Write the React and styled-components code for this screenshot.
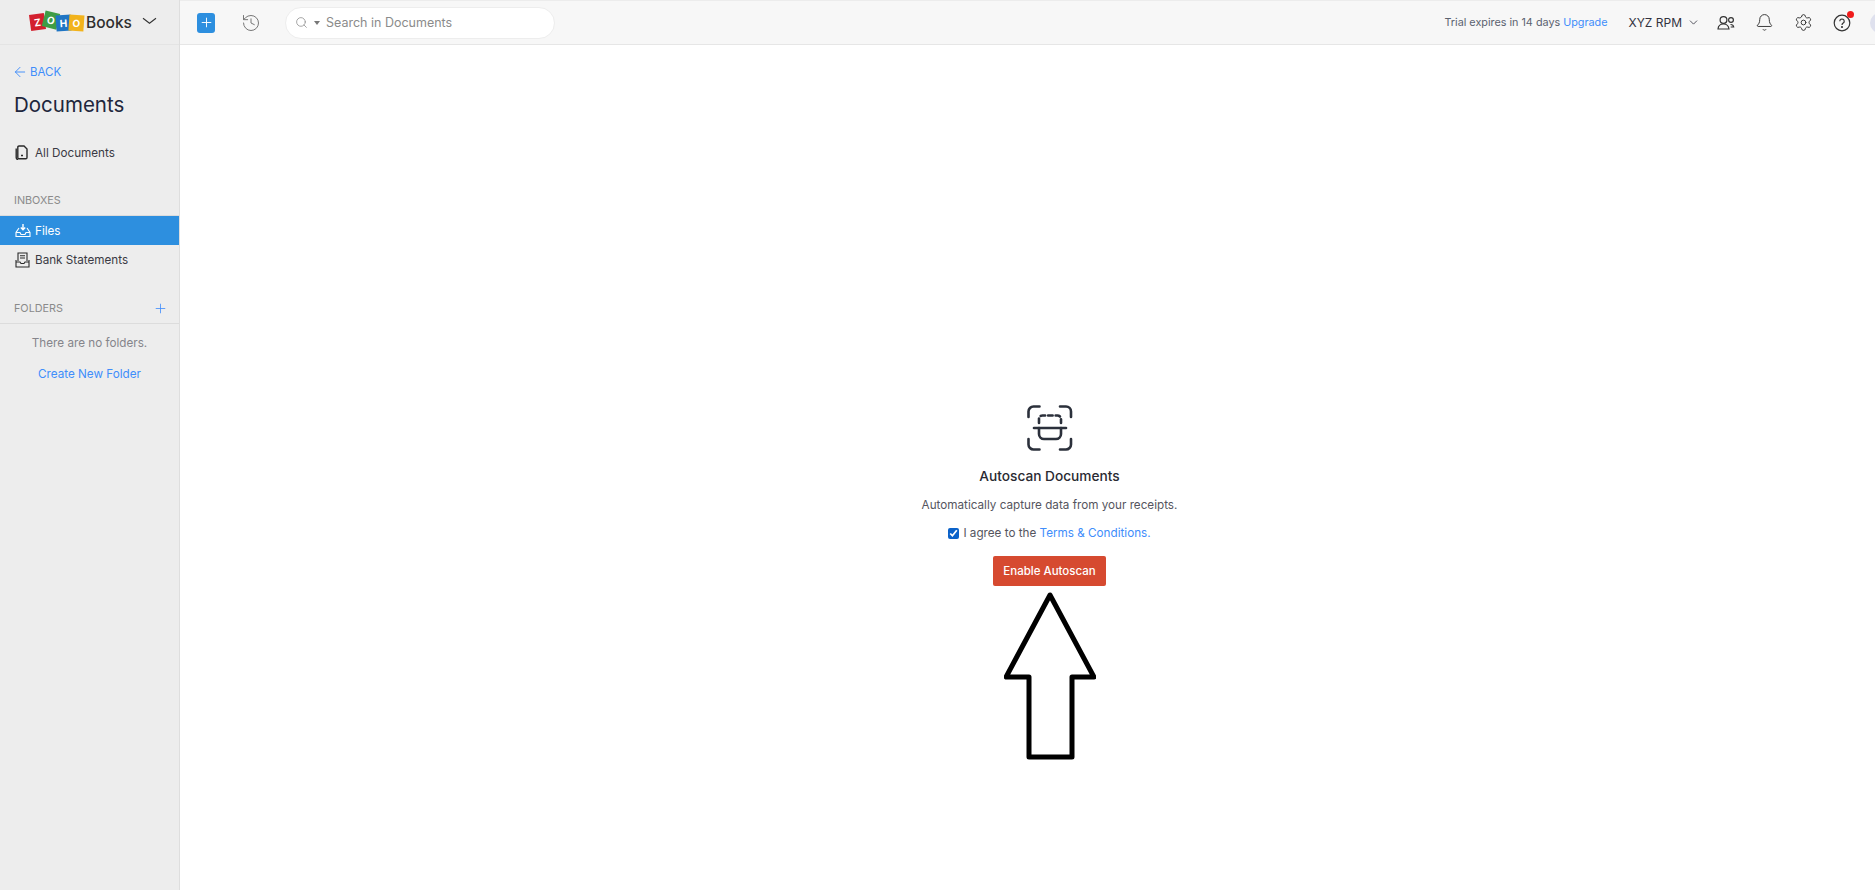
import React from "react";
import styled, { createGlobalStyle } from "styled-components";
import { ArrowLeft, Bell, ChevronDown, History, Plus, Search, Settings } from "lucide-react";

const GlobalStyle = createGlobalStyle`
	html, body {
		margin: 0;
		padding: 0;
		height: 100%;
		background: #fff;
		overflow: hidden;
	}
	body, input {
		font-family: Inter, "Liberation Sans", sans-serif;
	}
`;

const Page = styled.div`
	display: flex;
	width: 1875px;
	height: 890px;
`;

const Sidebar = styled.aside`
	width: 180px;
	box-sizing: border-box;
	flex: none;
	display: flex;
	flex-direction: column;
	background: #ededed;
	border-right: 1px solid #dedede;
`;

const Brand = styled.div`
	height: 44px;
	flex: none;
	display: flex;
	align-items: center;
	padding-left: 30px;
	border-bottom: 1px solid #e4e4e4;
	color: #2f2f2f;
`;

const Tiles = styled.div`
	display: flex;
	align-items: center;
	width: 56px;
`;

const Tile = styled.span`
	width: 15px;
	height: 16px;
	margin-right: -2px;
	flex: none;
	display: flex;
	align-items: center;
	justify-content: center;
	background: ${(p) => p.$bg};
	color: #fff;
	font-size: 10px;
	font-weight: 700;
	line-height: 1;
	transform: rotate(${(p) => p.$turn}deg) translateY(${(p) => p.$lift}px);
`;

const BrandName = styled.span`
	font-size: 15.5px;
	font-weight: 500;
	margin-right: 10px;
`;

const BrandArrow = styled.svg`
	margin-bottom: 2px;
`;

const SideBody = styled.div`
	display: flex;
	flex-direction: column;
	padding-top: 18px;
`;

const BackLink = styled.div`
	display: flex;
	align-items: center;
	gap: 2px;
	height: 17px;
	padding-left: 12px;
	color: #408dfb;
	font-size: 11.5px;
`;

const SideTitle = styled.h1`
	margin: 10px 0 0 14px;
	font-size: 20.5px;
	line-height: 30px;
	font-weight: 400;
	color: #21263c;
`;

const IconSlot = styled.span`
	width: 20px;
	flex: none;
	display: flex;
`;

const NavRow = styled.div`
	display: flex;
	align-items: center;
	height: 29px;
	padding-left: 15px;
	font-size: 11.7px;
	color: ${(p) => (p.$active ? "#fff" : "#3a3a44")};
	background: ${(p) => (p.$active ? "#2d8fdf" : "transparent")};
`;

const AllDocs = styled(NavRow)`
	margin-top: 18px;
`;

const SectionHead = styled.div`
	display: flex;
	align-items: center;
	justify-content: space-between;
	height: ${(p) => p.$h}px;
	margin-top: ${(p) => p.$top}px;
	padding: 0 11px 0 14px;
	border-bottom: 1px solid #dcdcdc;
	color: #8a8a8a;
	font-size: 10.8px;
`;

const EmptyNote = styled.div`
	margin-top: 10px;
	line-height: 18px;
	text-align: center;
	font-size: 11.7px;
	color: #85858b;
`;

const CreateLink = styled.div`
	margin-top: 13px;
	line-height: 18px;
	text-align: center;
	font-size: 11.7px;
	color: #408dfb;
`;

const Content = styled.div`
	flex: 1;
	display: flex;
	flex-direction: column;
	min-width: 0;
`;

const TopBar = styled.header`
	flex: none;
	display: flex;
	align-items: center;
	padding: 0 16px 0 17px;
	background: #f7f7f7;
	border-top: 1px solid #ececec;
	border-bottom: 1px solid #e6e6e6;
	box-sizing: border-box;
	height: 45px;
	color: #3b3b3b;
`;

const AddButton = styled.div`
	width: 18px;
	height: 20px;
	display: flex;
	align-items: center;
	justify-content: center;
	border-radius: 3px;
	background: #2d8fdf;
	color: #fff;
`;

const HistoryBtn = styled.div`
	display: flex;
	margin-left: 26px;
	color: #777;
`;

const SearchBox = styled.div`
	width: 270px;
	height: 32px;
	box-sizing: border-box;
	margin-left: 24px;
	padding-left: 9px;
	display: flex;
	align-items: center;
	background: #fff;
	border: 1px solid #ededed;
	border-radius: 16px;
	color: #8b8b8b;
	font-size: 12.5px;
`;

const Caret = styled.span`
	width: 0;
	height: 0;
	margin: 0 6px 0 6px;
	border-left: 3px solid transparent;
	border-right: 3px solid transparent;
	border-top: 4px solid #777;
`;

const TopRight = styled.div`
	margin-left: auto;
	display: flex;
	align-items: center;
`;

const Trial = styled.span`
	font-size: 10.8px;
	color: #5b6270;
`;

const Upgrade = styled.span`
	color: #408dfb;
`;

const OrgName = styled.div`
	display: flex;
	align-items: center;
	gap: 5px;
	margin: 0 17px 0 21px;
	font-size: 12px;
	color: #33333f;
`;

const IconBtn = styled.div`
	position: relative;
	display: flex;
	margin-left: ${(p) => p.$gap || 0}px;
	color: #333;
`;

const RedDot = styled.span`
	position: absolute;
	top: -3px;
	right: -3px;
	width: 7px;
	height: 7px;
	border-radius: 50%;
	background: #f01b1b;
`;

const Avatar = styled.div`
	width: 20px;
	height: 20px;
	margin-left: 19px;
	margin-right: -31px;
	flex: none;
	border-radius: 50%;
	background: #dfe1ee;
`;

const Main = styled.main`
	flex: 1;
	display: flex;
	flex-direction: column;
	align-items: center;
	padding: 360px 0 0 44px;
	background: #fff;
	overflow: hidden;
`;

const ScanTitle = styled.h2`
	margin: 15px 0 0;
	font-size: 13.7px;
	line-height: 20px;
	font-weight: 500;
	color: #2a2a32;
`;

const ScanText = styled.p`
	margin: 10px 0 0;
	font-size: 11.7px;
	line-height: 18px;
	color: #55555e;
`;

const AgreeRow = styled.label`
	display: flex;
	align-items: center;
	gap: 4px;
	margin-top: 10px;
	font-size: 11.7px;
	line-height: 18px;
	color: #55555e;
`;

const AgreeBox = styled.input`
	width: 11px;
	height: 11px;
	margin: 0;
	accent-color: #0b62c9;
`;

const TermsLink = styled.span`
	color: #408dfb;
`;

const EnableButton = styled.button`
	width: 113px;
	height: 30px;
	margin-top: 14px;
	padding: 0;
	border: none;
	border-radius: 2px;
	background: #d64a30;
	color: #fff;
	font-family: inherit;
	font-size: 11.5px;
	font-weight: 500;
`;

const ArrowMark = styled.svg`
	display: block;
	margin-top: 6px;
`;

const ZohoTiles = () => (
	<Tiles>
		<Tile $bg="#d3202e" $turn={-8} $lift={0}>Z</Tile>
		<Tile $bg="#3f9d45" $turn={14} $lift={-2}>O</Tile>
		<Tile $bg="#1f75c4" $turn={-4} $lift={1}>H</Tile>
		<Tile $bg="#f2b31c" $turn={4} $lift={1}>O</Tile>
	</Tiles>
);

const BrandChevron = () => (
	<BrandArrow width="15" height="8" viewBox="0 0 15 8" fill="none" stroke="#333" strokeWidth="1.1">
		<path d="M1 1.2l6.5 5 6.5-5" />
	</BrandArrow>
);

const DocIcon = () => (
	<svg width="13" height="15" viewBox="0 0 13 15" fill="none" stroke="#2a2a2a" strokeWidth="1.4">
		<path d="M4 1h5l3 3v8.5a1.2 1.2 0 0 1-1.2 1.2H4a1.2 1.2 0 0 1-1.2-1.2V2.2A1.2 1.2 0 0 1 4 1z" />
		<path d="M1.2 3.5v9a2 2 0 0 0 2 2" />
		<path d="M6 10.5h2" />
	</svg>
);

const InboxIcon = () => (
	<svg width="16" height="15" viewBox="0 0 16 15" fill="none" stroke="currentColor" strokeWidth="1.1">
		<path d="M4 5L1 9.5v4h14v-4L12 5" />
		<path d="M1 9.5h4l1 2h4l1-2h4" />
		<path d="M8 1v5.5M5.8 4.6L8 6.8l2.2-2.2" strokeWidth="1.4" />
	</svg>
);

const StatementIcon = () => (
	<svg width="15" height="16" viewBox="0 0 15 16" fill="none" stroke="#2a2a2a" strokeWidth="1.1">
		<path d="M3 9V1h9v8" />
		<path d="M5 3.8h5M5 6h5" />
		<path d="M1 8v7h13V8" />
		<path d="M1 10h4l1 1.5h3l1-1.5h4" />
	</svg>
);

const TeamIcon = () => (
	<svg width="18" height="16" viewBox="0 0 18 16" fill="none" stroke="#333" strokeWidth="1.2">
		<circle cx="6.5" cy="5" r="3.4" />
		<path d="M1 14c.3-3.2 2.4-5 5.5-5s5 1.6 5.5 5z" />
		<circle cx="14" cy="5" r="2.4" />
		<path d="M13.5 9.5c2 0 3 1 3.2 2.5h-3" />
	</svg>
);

const HelpIcon = () => (
	<svg width="18" height="18" viewBox="0 0 18 18" fill="none" stroke="#333" strokeWidth="1.2">
		<circle cx="9" cy="9" r="7.8" />
		<path d="M6.8 7.2a2.2 2.2 0 1 1 3.4 1.9c-.8.5-1.2 1-1.2 1.9" />
		<circle cx="9" cy="13" r=".5" />
	</svg>
);

const ScanIcon = () => (
	<svg width="46" height="46" viewBox="0 0 46 46" fill="none" stroke="#2b303b" strokeWidth="2.6" strokeLinecap="round">
		<path d="M1.5 12V6.5a5 5 0 0 1 5-5h6" />
		<path d="M33 1.5h6a5 5 0 0 1 5 5V12" />
		<path d="M1.5 34v5.5a5 5 0 0 0 5 5h6" />
		<path d="M33 44.5h6a5 5 0 0 0 5-5V34" />
		<path d="M7 23h32" />
		<path d="M12 23v6a5 5 0 0 0 5 5h12a5 5 0 0 0 5-5v-6" />
		<path d="M12 18v-4a3.5 3.5 0 0 1 3.5-3.5h15a3.5 3.5 0 0 1 3.5 3.5v4" strokeDasharray="4.5 3" />
	</svg>
);

const App = () => {
	return (
		<Page>
			<GlobalStyle />
			<Sidebar>
				<Brand>
					<ZohoTiles />
					<BrandName>Books</BrandName>
					<BrandChevron />
				</Brand>
				<SideBody>
					<BackLink>
						<ArrowLeft size={16} strokeWidth={1.4} />
						BACK
					</BackLink>
					<SideTitle>Documents</SideTitle>
					<AllDocs>
						<IconSlot><DocIcon /></IconSlot>
						All Documents
					</AllDocs>
					<SectionHead $top={18} $h={30}>INBOXES</SectionHead>
					<NavRow $active>
						<IconSlot><InboxIcon /></IconSlot>
						Files
					</NavRow>
					<NavRow>
						<IconSlot><StatementIcon /></IconSlot>
						Bank Statements
					</NavRow>
					<SectionHead $top={20} $h={29}>
						FOLDERS
						<Plus size={15} strokeWidth={1.3} color="#408dfb" />
					</SectionHead>
					<EmptyNote>There are no folders.</EmptyNote>
					<CreateLink>Create New Folder</CreateLink>
				</SideBody>
			</Sidebar>
			<Content>
				<TopBar>
					<AddButton>
						<Plus size={15} strokeWidth={1.5} />
					</AddButton>
					<HistoryBtn>
						<History size={20} strokeWidth={1.2} />
					</HistoryBtn>
					<SearchBox>
						<Search size={13} strokeWidth={1.4} />
						<Caret />
						Search in Documents
					</SearchBox>
					<TopRight>
						<Trial>
							Trial expires in 14 days <Upgrade>Upgrade</Upgrade>
						</Trial>
						<OrgName>
							XYZ RPM
							<ChevronDown size={13} strokeWidth={1.5} />
						</OrgName>
						<IconBtn>
							<TeamIcon />
						</IconBtn>
						<IconBtn $gap={20}>
							<Bell size={19} strokeWidth={1.2} />
						</IconBtn>
						<IconBtn $gap={20}>
							<Settings size={19} strokeWidth={1.2} />
						</IconBtn>
						<IconBtn $gap={20}>
							<HelpIcon />
							<RedDot />
						</IconBtn>
						<Avatar />
					</TopRight>
				</TopBar>
				<Main>
					<ScanIcon />
					<ScanTitle>Autoscan Documents</ScanTitle>
					<ScanText>Automatically capture data from your receipts.</ScanText>
					<AgreeRow>
						<AgreeBox type="checkbox" checked readOnly />
						<span>
							I agree to the <TermsLink>Terms &amp; Conditions.</TermsLink>
						</span>
					</AgreeRow>
					<EnableButton>Enable Autoscan</EnableButton>
					<ArrowMark width="92" height="170" viewBox="0 0 92 170" fill="#fff" stroke="#000" strokeWidth="5" strokeLinejoin="round">
						<path d="M46 3L2 85h23v80h43V85h22z" />
					</ArrowMark>
				</Main>
			</Content>
		</Page>
	);
};

export default App;
